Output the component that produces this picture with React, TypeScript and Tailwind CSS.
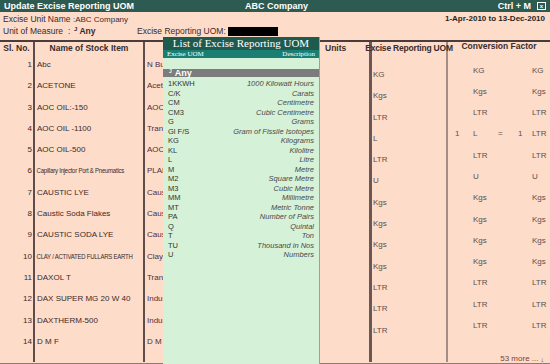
import React from 'react'

type Row = {
  no: number
  name: string
  under: string
  uom: string
  conv?: { a: string; b: string; n1?: string; n2?: string }
  tight?: boolean
}

const ROWS: Row[] = [
  { no: 1, name: 'Abc', under: 'N Bulk', uom: 'KG', conv: { a: 'KG', b: 'KG' } },
  { no: 2, name: 'ACETONE', under: 'Acetone', uom: 'Kgs', conv: { a: 'Kgs', b: 'Kgs' } },
  { no: 3, name: 'AOC OIL:-150', under: 'AOC', uom: 'LTR', conv: { a: 'LTR', b: 'LTR' } },
  { no: 4, name: 'AOC OIL -1100', under: 'Transformer', uom: 'L', conv: { a: 'L', b: 'LTR', n1: '1', n2: '1' } },
  { no: 5, name: 'AOC OIL-500', under: 'AOC', uom: 'LTR', conv: { a: 'LTR', b: 'LTR' } },
  { no: 6, name: 'Capillary Injector Port & Pneumatics', under: 'PLANT', uom: 'U', conv: { a: 'U', b: 'U' }, tight: true },
  { no: 7, name: 'CAUSTIC LYE', under: 'Caustic', uom: 'Kgs', conv: { a: 'Kgs', b: 'Kgs' } },
  { no: 8, name: 'Caustic Soda Flakes', under: 'Caustic', uom: 'Kgs', conv: { a: 'Kgs', b: 'Kgs' } },
  { no: 9, name: 'CAUSTIC SODA LYE', under: 'Caustic', uom: 'Kgs', conv: { a: 'Kgs', b: 'Kgs' } },
  { no: 10, name: 'CLAY / ACTIVATED FULLARS EARTH', under: 'Clay', uom: 'Kgs', conv: { a: 'Kgs', b: 'Kgs' }, tight: true },
  { no: 11, name: 'DAXOL T', under: 'Transformer', uom: 'LTR', conv: { a: 'LTR', b: 'LTR' } },
  { no: 12, name: 'DAX SUPER MG 20 W 40', under: 'Industrial', uom: 'LTR', conv: { a: 'LTR', b: 'LTR' } },
  { no: 13, name: 'DAXTHERM-500', under: 'Industrial', uom: 'LTR', conv: { a: 'LTR', b: 'LTR' } },
  { no: 14, name: 'D M F', under: 'D M F', uom: '' },
]

const UOMS: [string, string][] = [
  ['1KKWH', '1000 Kilowatt Hours'],
  ['C/K', 'Carats'],
  ['CM', 'Centimetre'],
  ['CM3', 'Cubic Centimetre'],
  ['G', 'Grams'],
  ['Gl F/S', 'Gram of Fissile Isotopes'],
  ['KG', 'Kilograms'],
  ['KL', 'Kilolitre'],
  ['L', 'Litre'],
  ['M', 'Metre'],
  ['M2', 'Square Metre'],
  ['M3', 'Cubic Metre'],
  ['MM', 'Millimetre'],
  ['MT', 'Metric Tonne'],
  ['PA', 'Number of Pairs'],
  ['Q', 'Quintal'],
  ['T', 'Ton'],
  ['TU', 'Thousand in Nos'],
  ['U', 'Numbers'],
]

export default function App() {
  return (
    <div className="relative w-[550px] h-[364px] overflow-hidden bg-[#fddcc9] text-[#3b2a2a] font-['Liberation_Sans',Arial,sans-serif] text-[8px] leading-none">
      {/* Title bar */}
      <div className="h-[12px] bg-[#2d5a51] text-white font-bold text-[9px] flex items-center px-[4px]">
        <span className="w-[241px]">Update Excise Reporting UOM</span>
        <span className="flex-1">ABC Company</span>
        <span className="mr-[6px]">Ctrl + M</span>
        <span className="w-[9px] h-[8px] border border-white text-[6px] flex items-center justify-center">x</span>
      </div>

      {/* Info lines */}
      <div className="flex items-center justify-between h-[12px] mt-[1px] px-[3px] text-[8.5px]">
        <span>
          Excise Unit Name <span className="text-[8px]">:ABC Company</span>
        </span>
        <span className="font-bold text-[8px] text-[#2a1f1f] mr-[2px]">1-Apr-2010 to 13-Dec-2010</span>
      </div>
      <div className="flex items-center h-[13px] px-[3px] text-[8.5px]">
        <span className="w-[65px]">Unit of Measure</span>
        <span className="w-[6px]">:</span>
        <span className="font-bold w-[63px]">
          <sup className="text-[6px]">J</sup> Any
        </span>
        <span>Excise Reporting UOM:</span>
        <span className="ml-[2px] w-[50px] h-[9px] bg-black" />
      </div>

      {/* Table */}
      <div className="mt-[2px] border-t-[2px] border-[#4a3c3a] flex h-[322px]">
        <Col w="w-[35px]" border="border-r-[2px] border-[#5e4d4a]" head="Sl. No.">
          {ROWS.map((r) => (
            <Cell key={r.no}>
              <span className="block text-right pr-[1px]">{r.no}</span>
            </Cell>
          ))}
        </Col>
        <Col w="w-[110px]" border="border-r-[2px] border-[#5e4d4a]" head="Name of Stock Item">
          {ROWS.map((r) => (
            <Cell key={r.no}>
              {r.tight ? (
                <span className="inline-block pl-[2px] whitespace-nowrap text-[7.5px] tracking-[-0.3px] origin-left scale-x-[0.8]">
                  {r.name}
                </span>
              ) : (
                <span className="block pl-[2px] whitespace-nowrap">{r.name}</span>
              )}
            </Cell>
          ))}
        </Col>
        <Col w="w-[173px]" border="" head="">
          {ROWS.map((r) => (
            <Cell key={r.no}>
              {/* only the part left of the popup is visible */}
              <span className="block ml-[2px] w-[16px] overflow-hidden whitespace-nowrap text-[#4c2f46]">{r.under}</span>
            </Cell>
          ))}
        </Col>
        <Col w="w-[54px]" border="border-r-[3px] border-[#6b5753]" head="Units" headClass="justify-start pl-[7px]">
          {null}
        </Col>
        <Col w="w-[76px]" border="border-r-[2px] border-[#a48d86]" head="Excise Reporting UOM" headClass="tracking-[-0.2px]">
          {ROWS.map((r) => (
            <Cell key={r.no}>
              <span className="block mt-[10px] pl-[1px] text-[#5a5050]">{r.uom}</span>
            </Cell>
          ))}
        </Col>
        <Col w="flex-1" border="" head="Conversion Factor">
          {ROWS.map((r) => (
            <Cell key={r.no}>
              {r.conv && (
                <span className="flex mt-[10px] text-[#5a5050]">
                  <span className="w-[25px] pl-[7px]">{r.conv.n1}</span>
                  <span className="w-[25px]">{r.conv.a}</span>
                  <span className="w-[20px]">{r.conv.n1 ? '=' : ''}</span>
                  <span className="w-[14px]">{r.conv.n2}</span>
                  <span>{r.conv.b}</span>
                </span>
              )}
            </Cell>
          ))}
          <div className="flex-1 flex items-end justify-end pr-[6px] pb-[3px] text-[#7a3f3f]">
            53 more ... <span className="ml-[2px] text-[7px]">↓</span>
          </div>
        </Col>
      </div>
      <div className="absolute left-0 right-0 bottom-0 h-[1px] bg-[#8b7b76]" />

      {/* Popup list */}
      <div className="absolute left-[163px] top-[37px] w-[157px] bottom-0 bg-[#d5f1d7] border-r border-[#9aa39a] flex flex-col">
        <div className="h-[13px] bg-[#1f5a4f] text-white text-[11px] font-['Liberation_Serif','Times_New_Roman',serif] flex items-center justify-center">
          List of Excise Reporting UOM
        </div>
        <div className="h-[8px] bg-[#1a7e73] text-white text-[7px] font-['Liberation_Serif','Times_New_Roman',serif] flex items-center justify-between px-[4px]">
          <span>Excise UOM</span>
          <span>Description</span>
        </div>
        <div className="h-[11px]" />
        <div className="h-[8px] bg-[#7c7c7c] text-white font-bold text-[9px] flex items-center pl-[6px]">
          <sup className="text-[5px] mr-[3px]">J</sup>Any
        </div>
        <div className="pt-[2px] px-[5px]">
          {UOMS.map(([code, desc]) => (
            <div key={code} className="h-[9.5px] flex items-center justify-between">
              <span className="text-[7.5px] text-[#333]">{code}</span>
              <span className="italic text-[7.5px] text-[#4a4a4a]">{desc}</span>
            </div>
          ))}
        </div>
      </div>
    </div>
  )
}

function Col({
  w,
  border,
  head,
  headClass,
  children,
}: {
  w: string
  border: string
  head: string
  headClass?: string
  children: React.ReactNode
}) {
  return (
    <div className={`${w} ${border} flex flex-col`}>
      <div
        className={`h-[13px] flex items-center justify-center font-bold text-[#3a2c2b] whitespace-nowrap text-[8.5px] ${headClass ?? ''}`}
      >
        {head}
      </div>
      <div className="pt-[6px] flex flex-col flex-1">{children}</div>
    </div>
  )
}

function Cell({ children }: { children: React.ReactNode }) {
  return <div className="h-[21.3px] shrink-0">{children}</div>
}
